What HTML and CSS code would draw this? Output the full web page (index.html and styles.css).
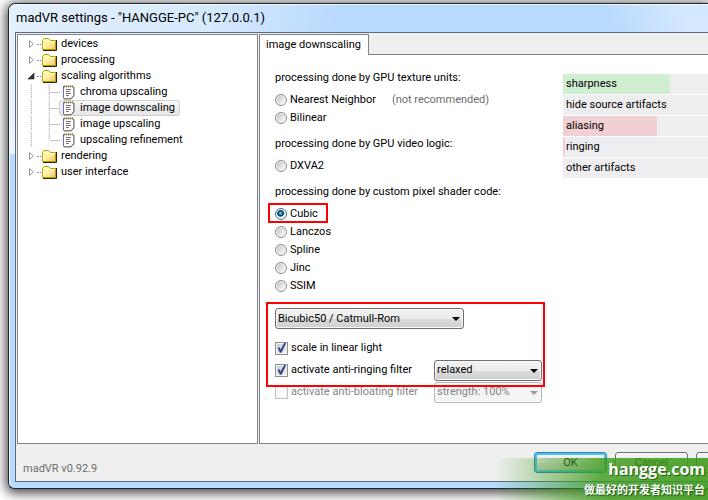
FILE: index.html
```
<!DOCTYPE html>
<html lang="en">
<head>
<meta charset="utf-8">
<title>madVR settings</title>
<link rel="stylesheet" href="styles.css">
</head>
<body>
<svg class="defs" aria-hidden="true">
  <defs>
    <linearGradient id="gold" x1="0" y1="0" x2="1" y2="1">
      <stop offset="0" stop-color="#ffffb4"/><stop offset=".5" stop-color="#fff09c"/><stop offset="1" stop-color="#f3b679"/>
    </linearGradient>
    <symbol id="folder" viewBox="0 0 16 14">
      <path d="M.5 12.500V3.500L2.500 1.500H6.500L8.500 3.500H13.500V12.500Z" fill="url(#gold)" stroke="#b0a000"/>
      <path d="M1.500 11V4.500H12.500" fill="none" stroke="#ffffda"/>
      <path d="M1 13.500H14.500V3" fill="none" stroke="#292500"/>
    </symbol>
    <symbol id="page" viewBox="0 0 13 16">
      <path d="M1.500 2.500H11.500V11.500L9 14.500H1.500Z" fill="#fff" stroke="#9a9a9a"/>
      <path d="M1.500 2V14" stroke="#6b69bd"/>
      <path d="M12 3V12L9 15H2" fill="none" stroke="#77776f"/>
      <path d="M2 2.500H12" stroke="#8e8060" stroke-width="2" stroke-dasharray="1 1"/>
      <path d="M2 1.500H11" stroke="#c89b50" stroke-dasharray="1 1"/>
      <path d="M4 5.500H9M4 7.500H8M4 9.500H9M4 11.500H7" stroke="#757575"/>
    </symbol>
    <symbol id="closed" viewBox="0 0 8 10"><path d="M2.500 1.500V8.500L6.500 5Z" fill="#fff" stroke="#999"/></symbol>
    <symbol id="open" viewBox="0 0 8 10"><path d="M7 2V8H1Z" fill="#333" stroke="#222" stroke-width=".6"/></symbol>
    <symbol id="branch" viewBox="0 0 35 16">
      <path d="M4.500 0V16M23.500 0V16M24 8.500H35" fill="none" stroke="#888" stroke-dasharray="1 1"/>
    </symbol>
    <symbol id="branch-end" viewBox="0 0 35 16">
      <path d="M4.500 0V16M23.500 0V8M24 8.500H35" fill="none" stroke="#888" stroke-dasharray="1 1"/>
    </symbol>
  </defs>
</svg>
<div class="window">
  <header class="titlebar">madVR settings - "HANGGE-PC" (127.0.0.1)</header>
  <div class="client">
    <div class="panes">
      <nav class="tree">
        <ul>
          <li class="node"><svg class="twist"><use href="#closed"/></svg><i class="dots"></i><svg class="folder"><use href="#folder"/></svg><span>devices</span></li>
          <li class="node"><svg class="twist"><use href="#closed"/></svg><i class="dots"></i><svg class="folder"><use href="#folder"/></svg><span>processing</span></li>
          <li class="node"><svg class="twist"><use href="#open"/></svg><i class="dots"></i><svg class="folder"><use href="#folder"/></svg><span>scaling algorithms</span></li>
          <li class="node"><svg class="branch"><use href="#branch"/></svg><span class="leaf"><svg class="page"><use href="#page"/></svg>chroma upscaling</span></li>
          <li class="node"><svg class="branch"><use href="#branch"/></svg><span class="leaf selected"><svg class="page"><use href="#page"/></svg>image downscaling</span></li>
          <li class="node"><svg class="branch"><use href="#branch"/></svg><span class="leaf"><svg class="page"><use href="#page"/></svg>image upscaling</span></li>
          <li class="node"><svg class="branch"><use href="#branch-end"/></svg><span class="leaf"><svg class="page"><use href="#page"/></svg>upscaling refinement</span></li>
          <li class="node"><svg class="twist"><use href="#closed"/></svg><i class="dots"></i><svg class="folder"><use href="#folder"/></svg><span>rendering</span></li>
          <li class="node"><svg class="twist"><use href="#closed"/></svg><i class="dots"></i><svg class="folder"><use href="#folder"/></svg><span>user interface</span></li>
        </ul>
      </nav>
      <main class="detail">
        <div class="tabs"><button class="tab" type="button">image downscaling</button></div>
        <div class="page-body">
          <form class="options">
            <fieldset>
              <legend>processing done by GPU texture units:</legend>
              <div class="row"><label><input type="radio" name="alg">Nearest Neighbor</label><span class="hint">(not recommended)</span></div>
              <div class="row"><label><input type="radio" name="alg">Bilinear</label></div>
            </fieldset>
            <fieldset>
              <legend>processing done by GPU video logic:</legend>
              <div class="row"><label><input type="radio" name="alg">DXVA2</label></div>
            </fieldset>
            <fieldset>
              <legend>processing done by custom pixel shader code:</legend>
              <div class="row marked"><label><input type="radio" name="alg" checked>Cubic</label></div>
              <div class="row"><label><input type="radio" name="alg">Lanczos</label></div>
              <div class="row"><label><input type="radio" name="alg">Spline</label></div>
              <div class="row"><label><input type="radio" name="alg">Jinc</label></div>
              <div class="row"><label><input type="radio" name="alg">SSIM</label></div>
            </fieldset>
            <div class="tuning">
              <div class="combo wide"><select aria-label="Cubic variant"><option>Bicubic50 / Catmull-Rom</option></select></div>
              <div class="checks">
                <div class="row tall"><label><input type="checkbox" checked>scale in linear light</label></div>
                <div class="row tall"><label><input type="checkbox" checked>activate anti-ringing filter</label><div class="combo"><select aria-label="Anti-ringing filter"><option>relaxed</option></select></div></div>
                <div class="row tall off"><label><input type="checkbox" disabled>activate anti-bloating filter</label><div class="combo"><select aria-label="Anti-bloating filter" disabled><option>strength: 100%</option></select></div></div>
              </div>
            </div>
          </form>
          <ul class="meters">
            <li><i class="fill good" style="width:74%"></i><span>sharpness</span></li>
            <li><span>hide source artifacts</span></li>
            <li><i class="fill bad" style="width:65%"></i><span>aliasing</span></li>
            <li><i class="fill bad" style="width:1.4%"></i><span>ringing</span></li>
            <li><span>other artifacts</span></li>
          </ul>
        </div>
      </main>
    </div>
    <footer class="footer">
      <span class="version">madVR v0.92.9</span>
      <div class="buttons">
        <button class="btn default" type="button">OK</button>
        <button class="btn" type="button">Cancel</button>
        <button class="btn" type="button"></button>
      </div>
    </footer>
  </div>
</div>
<div class="watermark"><strong>hangge.com</strong><span lang="zh">做最好的开发者知识平台</span></div>
</body>
</html>
```
FILE: styles.css
```
*, *::before, *::after { box-sizing: border-box; }

body {
  margin: 0;
  height: 100vh;
  overflow: hidden;
  position: relative;
  display: flex;
  background: #fff;
  color: #000;
  font: 11px/16px Roboto, "Liberation Sans", sans-serif;
}

ul { list-style: none; margin: 0; padding: 0; }
svg { display: block; flex: none; }
.defs { position: absolute; width: 0; height: 0; }

.window {
  flex: 1;
  min-width: 0;
  margin: 3px 0 11px 8px;
  padding: 0 0 6px 6px;
  display: flex;
  flex-direction: column;
  border: 1px solid #20252b;
  border-right: 0;
  border-radius: 7px 0 0 6px;
  background:
    linear-gradient(100deg, #e3f0fd 0, #d6e9fd 200px, rgba(184, 218, 255, 0) 330px) 0 0 / 100% 28px no-repeat,
    linear-gradient(70deg, rgba(212, 232, 255, 0) 85%, #d4e8ff 96%) 0 0 / 100% 28px no-repeat,
    linear-gradient(#b8daff, #b8daff) 0 0 / 100% 28px no-repeat,
    linear-gradient(#e2effd, #eaf4ff 149px, #b8daff 151px);
  box-shadow: inset 1px 1px 0 #f4faff, 0 2px 12px 2px rgba(0, 0, 0, .75);
}

.titlebar {
  height: 28px;
  padding-left: 1px;
  font: 13px/27px Roboto, "Liberation Sans", sans-serif;
  white-space: nowrap;
}

.client {
  flex: 1;
  min-height: 0;
  display: flex;
  flex-direction: column;
  border: 1px solid #5c6b80;
  border-right: 0;
  background: #efefef;
}

.panes { flex: 1; min-height: 0; display: flex; gap: 1px; padding-top: 1px; }

.tree {
  flex: 0 0 241px;
  margin-left: 1px;
  padding: 1px 0 0 9px;
  border: 1px solid #82828a;
  background: #fff;
}

.node { display: flex; align-items: center; height: 16px; white-space: nowrap; }
.twist { width: 8px; height: 10px; }
.dots { width: 4px; margin: 0 1px 0 2px; border-top: 1px dotted #888; }
.folder { width: 16px; height: 14px; margin-right: 3px; }
.branch { width: 33px; height: 16px; margin-right: -1px; }
.leaf { display: flex; align-items: center; height: 16px; padding: 0 4px 0 2px; border: 1px solid transparent; border-radius: 3px; }
.leaf.selected { border-color: #d0d0d0; background: linear-gradient(#f8f8f8, #e5e5e5); }
.page { width: 13px; height: 16px; margin-right: 5px; }

.detail { flex: 1; min-width: 0; display: flex; flex-direction: column; }
.tabs { height: 20px; }
.tab {
  position: relative;
  height: 21px;
  padding: 0 7px 0 6px;
  border: 1px solid #82828a;
  border-bottom: 0;
  background: #fff;
  font: inherit;
  color: inherit;
}
.page-body {
  flex: 1;
  min-height: 0;
  display: flex;
  padding: 14px 0 0 15px;
  border: 1px solid #82828a;
  border-right: 0;
  background: #fff;
}

.options { flex: 0 0 288px; white-space: nowrap; }
fieldset { margin: 0 0 8px; padding: 0; border: 0; min-width: 0; }
legend { padding: 0; margin-bottom: 4px; line-height: 18px; }
.row { display: flex; align-items: center; height: 18px; position: relative; }
.row.tall { height: 22px; }
label { display: flex; align-items: center; }
.hint { margin-left: 16px; color: #6d6d6d; }

input { appearance: none; flex: none; position: relative; margin: 0 3px 0 0; border: 1px solid #8e8f8f; background: #f4f4f4; }
input[type="radio"] {
  width: 12px;
  height: 12px;
  border-radius: 50%;
  background: linear-gradient(135deg, #b9bdc2, #f6f6f6 80%);
  box-shadow: inset 0 0 0 1px #f4f4f4;
}
input[type="radio"]:checked {
  border-color: #50718c;
  background: radial-gradient(circle at 45% 42%, #8fe0fa 0, #1d78a8 20%, #10344f 38%, #c9dfec 46%, #eef5fa 60%);
}
input[type="checkbox"] { width: 13px; height: 13px; box-shadow: inset 0 0 0 1px #f4f4f4; background: linear-gradient(135deg, #c3c8d0, #f4f4f4); }
input[type="checkbox"]:checked::before {
  content: "";
  position: absolute;
  inset: 0;
  background: #344a8c;
  clip-path: polygon(14% 48%, 32% 44%, 42% 64%, 74% 4%, 92% 6%, 50% 94%, 36% 94%);
}
input[type="checkbox"]:disabled { border-color: #c4c4c4; background: #fbfbfb; }
.off { color: #858585; }

.marked::after, .tuning::after {
  content: "";
  position: absolute;
  border: 2px solid #f00;
  pointer-events: none;
}
.marked::after { left: -7px; top: -2px; width: 60px; height: 20px; }

.tuning { position: relative; margin-top: 13px; }
.tuning::after { left: -9px; top: -6px; width: 279px; height: 85px; }
.checks { margin-top: 8px; }

.combo { position: relative; margin-left: auto; width: 108px; }
.combo.wide { width: 189px; margin-left: 0; }
.tall .combo { margin-right: 21px; }
select {
  appearance: none;
  display: block;
  width: 100%;
  height: 21px;
  padding: 0 18px 0 2px;
  border: 1px solid #707070;
  border-radius: 3px;
  background: linear-gradient(#f2f2f2 0, #ebebeb 50%, #dcdcdc 51%, #cfcfcf);
  box-shadow: inset 0 0 0 1px #fafafa;
  font: inherit;
  color: #000;
}
select:disabled { border-color: #b5b8bc; background: #f4f4f4; color: #858585; opacity: 1; }
.combo::after {
  content: "";
  position: absolute;
  right: 4px;
  top: 9px;
  border: 4px solid transparent;
  border-top-color: #000;
  border-bottom: 0;
  pointer-events: none;
}
.off .combo::after { border-top-color: #999; }

.meters { flex: 1; min-width: 0; display: flex; flex-direction: column; gap: 1px; padding-top: 5px; }
.meters li { position: relative; height: 20px; padding-left: 3px; line-height: 20px; background: #eeeef0; white-space: nowrap; }
.meters span { position: relative; }
.fill { position: absolute; left: 0; top: 0; bottom: 0; }
.good { background: #d0efd0; }
.bad { background: #f0d0d2; }

.footer { display: flex; justify-content: space-between; height: 37px; padding: 8px 0 0 7px; overflow: hidden; }
.version { margin-top: 9px; color: #6d6d6d; }
.buttons { display: flex; gap: 8px; margin-right: -61px; }
.btn {
  width: 73px;
  height: 21px;
  padding: 0;
  border: 1px solid #707070;
  border-radius: 3px;
  background: linear-gradient(#f3f3f3 0, #ebebeb 50%, #dddddd 51%, #cfcfcf);
  box-shadow: inset 0 0 0 1px #fafafa;
  font: inherit;
  color: #000;
}
.btn.default { border-color: #3c7fb1; box-shadow: inset 0 0 0 2px #47c4ee; }

.watermark {
  position: absolute;
  right: 0;
  bottom: 0;
  width: 212px;
  height: 42px;
  padding-right: 3px;
  display: flex;
  flex-direction: column;
  align-items: flex-end;
  color: #fff;
  white-space: nowrap;
  background: linear-gradient(90deg, rgba(60, 155, 25, 0), rgba(60, 155, 25, .8) 50%, rgba(60, 155, 25, .88));
  text-shadow: 1px 1px 1px #1c5c10;
}
.watermark strong { font: bold 16px/22px "Open Sans", sans-serif; }
.watermark span { font: bold 11px/18px "Noto Sans CJK SC", sans-serif; }
```
